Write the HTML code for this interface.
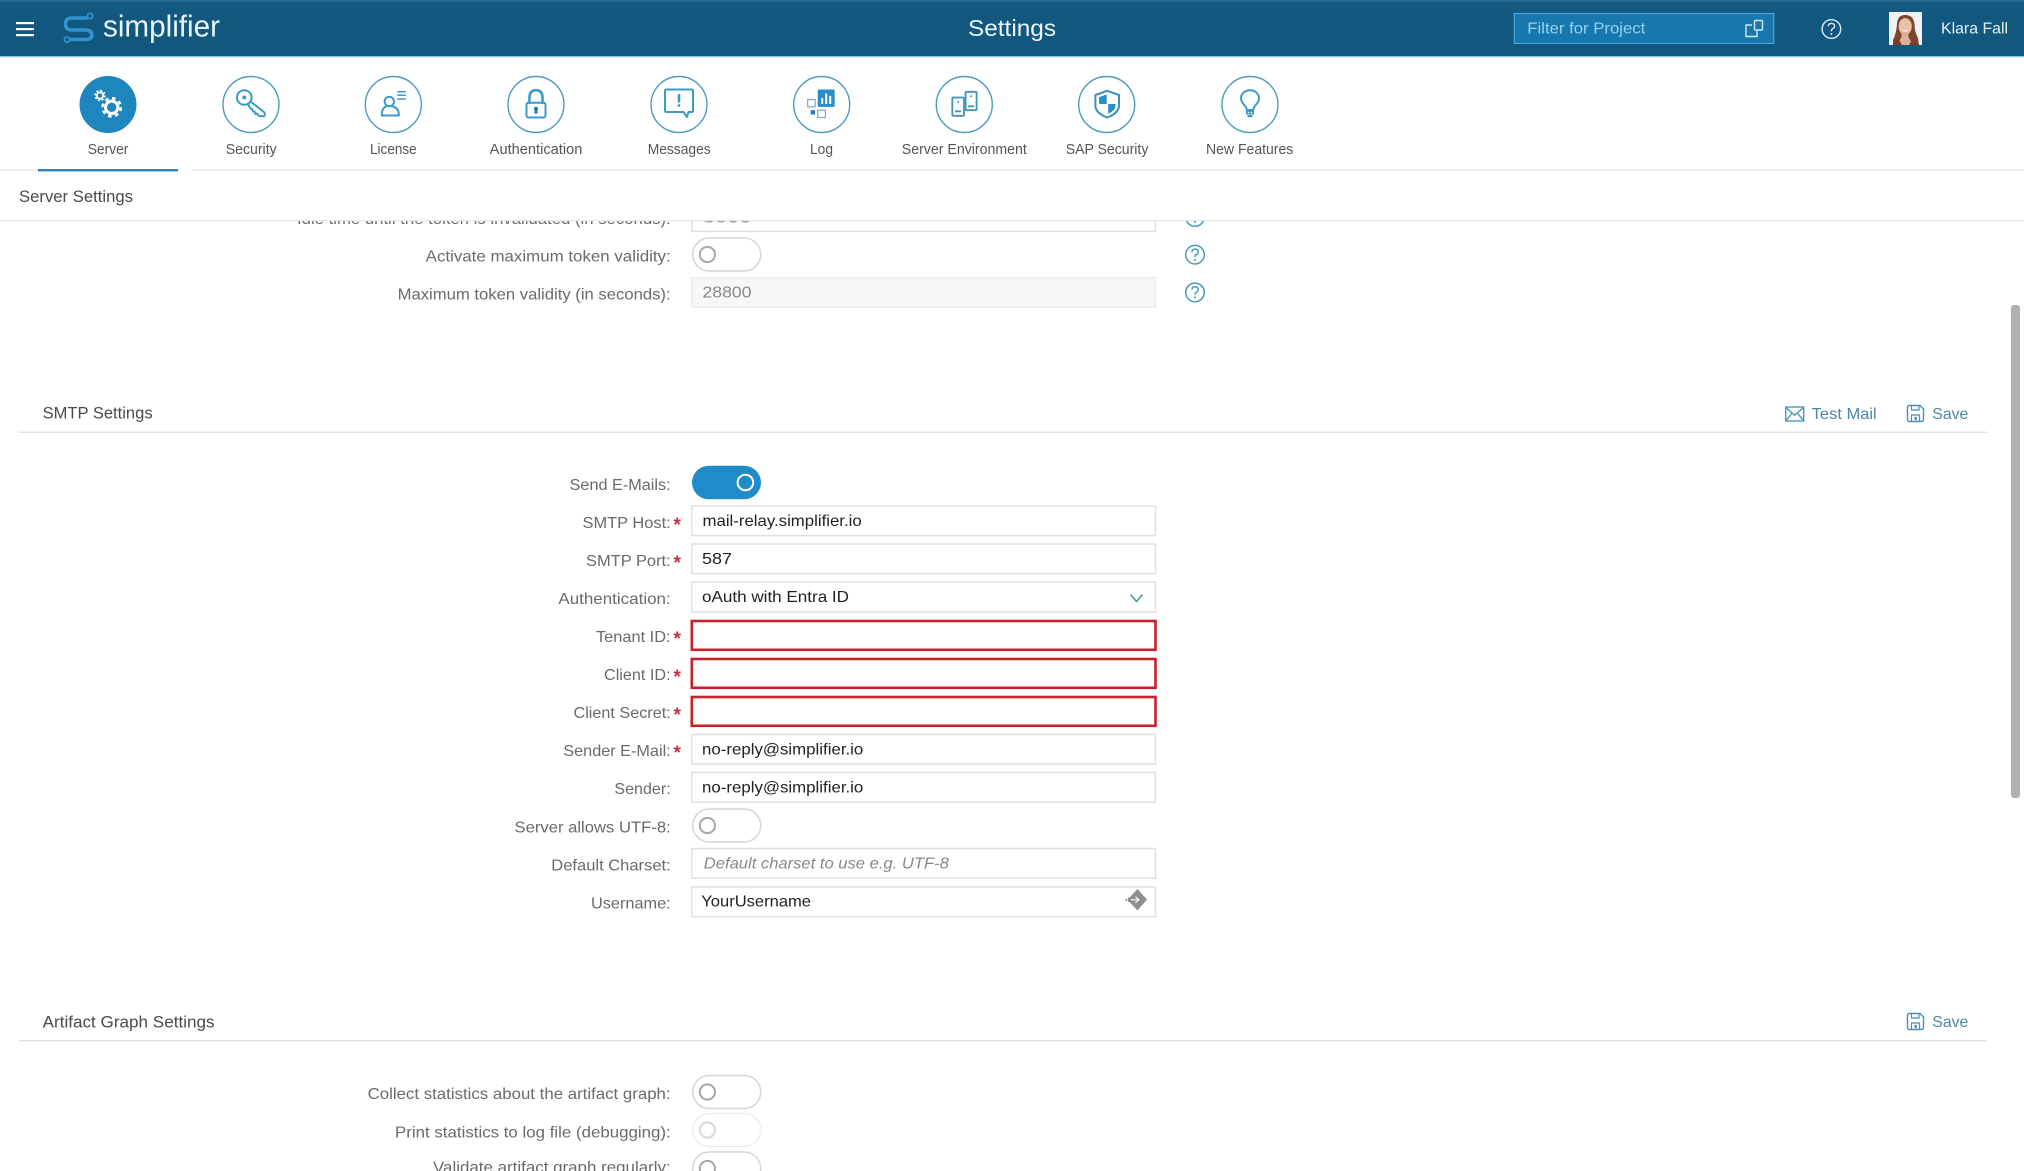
<!DOCTYPE html>
<html lang="en">
<head>
<meta charset="utf-8">
<title>Settings</title>
<style>
html,body{margin:0;padding:0;background:#fff;width:2024px;height:1171px;overflow:hidden}
svg{display:block;filter:blur(.35px)}
text{font-family:"Liberation Sans",sans-serif}
.l{font-size:16px;fill:#6a6a6a}
.v{font-size:16px;fill:#222}
.t{font-size:14.5px;fill:#555}
.s{font-size:16.5px;fill:#4a4a4a}
.a{font-size:16px;fill:#4f87a6}
.st{font-size:19px;font-weight:bold;fill:#c2303f}
.in{fill:#fff;stroke:#e0e0e0;stroke-width:1.5}
.re{fill:#fff;stroke:#c8202a;stroke-width:2.6}
.tg{fill:#fff;stroke:#d6d6d6;stroke-width:1.5}
.kn{fill:#fff;stroke:#a8a8a8;stroke-width:2}
.ic{fill:none;stroke:#3a9bc9;stroke-width:2;stroke-linejoin:round;stroke-linecap:round}
.ci{fill:#fff;stroke:#4c9cbc;stroke-width:1.4}
.f{fill:#2a8fc9}
</style>
</head>
<body>
<svg xmlns="http://www.w3.org/2000/svg" width="2024" height="1171" viewBox="0 0 2024 1171">
<defs>
<g id="help"><circle r="9.3" fill="#fff" stroke="#4a9ab5" stroke-width="1.5"/><path d="M-3,-2.6 Q-3,-5.6 0,-5.6 Q3.2,-5.6 3.2,-2.8 Q3.2,-1 1,0 Q0,.6 0,2.4" fill="none" stroke="#4a9ab5" stroke-width="1.5"/><circle cy="5" r="1" fill="#4a9ab5"/></g>
<g id="save"><path d="M1,2.5 Q1,.5 3,.5 H13.5 L17,4 V14.5 Q17,16.5 15,16.5 H3 Q1,16.5 1,14.5 Z" fill="none" stroke="#4d8fae" stroke-width="1.4"/><path d="M5,.8 V5 H12.5 V.8 M5,16 V10 H13 V16 M8.5,12.5 H10 V14.5 H8.5 Z" fill="none" stroke="#4d8fae" stroke-width="1.2"/></g>
</defs>
<rect width="2024" height="1171" fill="#fff"/>

<!-- content rows -->
<rect class="in" x="691.8" y="202" width="463.7" height="29.4"/>
<text class="l" x="297" y="224" textLength="373.7" lengthAdjust="spacingAndGlyphs">Idle time until the token is invalidated (in seconds):</text>
<text class="v" x="702.5" y="222.5" textLength="49" lengthAdjust="spacingAndGlyphs" style="fill:#888">3600</text>
<use href="#help" x="1195" y="217"/>

<text class="l" x="425.7" y="261.7" textLength="245" lengthAdjust="spacingAndGlyphs">Activate maximum token validity:</text>
<rect class="tg" x="692.7" y="238" width="68" height="33" rx="16.5"/><circle class="kn" cx="707.4" cy="254.5" r="7.6"/>
<use href="#help" x="1195" y="254.7"/>

<text class="l" x="397.6" y="299.3" textLength="273" lengthAdjust="spacingAndGlyphs">Maximum token validity (in seconds):</text>
<rect x="691.8" y="277.8" width="463.7" height="29.4" fill="#f7f7f7" stroke="#ececec" stroke-width="1.5"/>
<text class="v" x="702.5" y="297.7" textLength="49" lengthAdjust="spacingAndGlyphs" style="fill:#888">28800</text>
<use href="#help" x="1195" y="292.4"/>

<!-- SMTP header -->
<text class="s" x="42.6" y="418.5" textLength="110" lengthAdjust="spacingAndGlyphs">SMTP Settings</text>
<rect x="19" y="431.6" width="1968" height="1.4" fill="#e2e2e2"/>
<g fill="none" stroke="#4d9ab5" stroke-width="1.4"><rect x="1785.7" y="407" width="18" height="14"/><path d="M1785.7,407.3 L1794.7,415.3 L1803.7,407.3 M1785.7,420.8 L1792,413.3 M1803.7,420.8 L1797.5,413.3"/></g>
<text class="a" x="1811.7" y="419" textLength="65" lengthAdjust="spacingAndGlyphs">Test Mail</text>
<use href="#save" x="1906.5" y="405"/>
<text class="a" x="1932.3" y="419" textLength="36" lengthAdjust="spacingAndGlyphs">Save</text>

<!-- Send -->
<text class="l" x="569.6" y="490" textLength="101" lengthAdjust="spacingAndGlyphs">Send E-Mails:</text>
<rect x="692" y="465.7" width="69" height="33.6" rx="16.8" fill="#1f8cc9"/>
<circle cx="745.4" cy="482.5" r="7.8" fill="#1f8cc9" stroke="#fff" stroke-width="2"/>

<text class="l" x="582.5" y="528" textLength="88.2" lengthAdjust="spacingAndGlyphs">SMTP Host:</text>
<text class="st" x="673.5" y="531">*</text>
<rect class="in" x="691.8" y="506" width="463.7" height="29.6"/>
<text class="v" x="702.5" y="526" textLength="159.2" lengthAdjust="spacingAndGlyphs">mail-relay.simplifier.io</text>

<text class="l" x="586" y="566" textLength="84.7" lengthAdjust="spacingAndGlyphs">SMTP Port:</text>
<text class="st" x="673.5" y="569">*</text>
<rect class="in" x="691.8" y="544" width="463.7" height="29.6"/>
<text class="v" x="702" y="564" textLength="30" lengthAdjust="spacingAndGlyphs">587</text>

<text class="l" x="558.4" y="604" textLength="112.3" lengthAdjust="spacingAndGlyphs">Authentication:</text>
<rect class="in" x="691.8" y="582.2" width="463.7" height="29.8"/>
<text class="v" x="702" y="602" textLength="147" lengthAdjust="spacingAndGlyphs">oAuth with Entra ID</text>
<path d="M1130.5,594.5 L1136.5,601.5 L1142.5,594.5" fill="none" stroke="#4a9a9a" stroke-width="1.6"/>

<text class="l" x="596" y="642" textLength="74.6" lengthAdjust="spacingAndGlyphs">Tenant ID:</text>
<text class="st" x="673.5" y="645">*</text>
<rect class="re" x="691.8" y="621" width="463.7" height="28.8"/>

<text class="l" x="604" y="680" textLength="66.6" lengthAdjust="spacingAndGlyphs">Client ID:</text>
<text class="st" x="673.5" y="683">*</text>
<rect class="re" x="691.8" y="659" width="463.7" height="28.8"/>

<text class="l" x="573.5" y="718" textLength="97.2" lengthAdjust="spacingAndGlyphs">Client Secret:</text>
<text class="st" x="673.5" y="721">*</text>
<rect class="re" x="691.8" y="697" width="463.7" height="28.8"/>

<text class="l" x="563.3" y="756" textLength="107.4" lengthAdjust="spacingAndGlyphs">Sender E-Mail:</text>
<text class="st" x="673.5" y="759">*</text>
<rect class="in" x="691.8" y="734.5" width="463.7" height="29.6"/>
<text class="v" x="702" y="754.5" textLength="161.3" lengthAdjust="spacingAndGlyphs">no-reply@simplifier.io</text>

<text class="l" x="614.4" y="794" textLength="56.3" lengthAdjust="spacingAndGlyphs">Sender:</text>
<rect class="in" x="691.8" y="772.5" width="463.7" height="29.6"/>
<text class="v" x="702" y="792.5" textLength="161.3" lengthAdjust="spacingAndGlyphs">no-reply@simplifier.io</text>

<text class="l" x="514.5" y="832.3" textLength="156.2" lengthAdjust="spacingAndGlyphs">Server allows UTF-8:</text>
<rect class="tg" x="692.7" y="809" width="68" height="33" rx="16.5"/><circle class="kn" cx="707.4" cy="825.5" r="7.6"/>

<text class="l" x="551.3" y="870.7" textLength="119.4" lengthAdjust="spacingAndGlyphs">Default Charset:</text>
<rect class="in" x="691.8" y="848.5" width="463.7" height="29.6"/>
<text class="v" x="703.8" y="868.7" textLength="245" lengthAdjust="spacingAndGlyphs" style="fill:#888;font-style:italic">Default charset to use e.g. UTF-8</text>

<text class="l" x="591" y="908.3" textLength="79.7" lengthAdjust="spacingAndGlyphs">Username:</text>
<rect class="in" x="691.8" y="887" width="463.7" height="29.6"/>
<text class="v" x="701.3" y="906.7" textLength="109.7" lengthAdjust="spacingAndGlyphs">YourUsername</text>
<path d="M1137.5,889 L1147,899.5 L1137.5,910.5 L1129.5,902 H1128 V897.5 H1129.5 Z" fill="#8f8f8f"/>
<path d="M1131,899.8 H1138 M1135.5,896.8 L1139,899.8 L1135.5,902.8" fill="none" stroke="#fff" stroke-width="1.1"/>
<circle cx="1126.3" cy="899.8" r="1.1" fill="#8f8f8f"/>

<!-- Artifact -->
<text class="s" x="42.6" y="1027.5" textLength="172" lengthAdjust="spacingAndGlyphs">Artifact Graph Settings</text>
<rect x="19" y="1040" width="1968" height="1.4" fill="#e2e2e2"/>
<use href="#save" x="1906.5" y="1013"/>
<text class="a" x="1932.3" y="1027" textLength="36" lengthAdjust="spacingAndGlyphs">Save</text>

<text class="l" x="367.6" y="1099" textLength="303" lengthAdjust="spacingAndGlyphs">Collect statistics about the artifact graph:</text>
<rect class="tg" x="692.7" y="1075.5" width="68" height="33" rx="16.5"/><circle class="kn" cx="707.4" cy="1092" r="7.6"/>
<text class="l" x="395" y="1137.3" textLength="275.7" lengthAdjust="spacingAndGlyphs">Print statistics to log file (debugging):</text>
<rect x="692.7" y="1113.5" width="68" height="33" rx="16.5" fill="#fff" stroke="#efefef" stroke-width="1.5"/><circle cx="707.4" cy="1130" r="7.6" fill="#fff" stroke="#d8d8d8" stroke-width="2"/>
<text class="l" x="433" y="1172.7" textLength="237.7" lengthAdjust="spacingAndGlyphs">Validate artifact graph regularly:</text>
<rect class="tg" x="692.7" y="1152" width="68" height="33" rx="16.5"/><circle class="kn" cx="707.4" cy="1168.5" r="7.6"/>

<!-- scrollbar -->
<rect x="2011" y="305" width="9" height="493" rx="3" fill="#b0b0b0"/>

<!-- white band above scroll area -->
<rect x="0" y="57" width="2024" height="163.4" fill="#fff"/>
<rect x="0" y="220" width="2024" height="1.2" fill="#e6e6e6"/>

<!-- header -->
<rect width="2024" height="56" fill="#12577d"/>
<rect width="2024" height="14" fill="#14597f"/>
<rect width="2024" height="2" fill="#2a6c90"/>
<rect y="56" width="2024" height="1.4" fill="#8cc8e8"/>
<rect x="16" y="22" width="18" height="2.2" fill="#fff"/>
<rect x="16" y="28" width="18" height="2.2" fill="#fff"/>
<rect x="16" y="34" width="18" height="2.2" fill="#fff"/>
<g fill="none" stroke="#2e93cf">
<path d="M87.5,18 H72 Q65.5,18 65.5,24 Q65.5,30 72,30 H85 Q92,30 92,35 Q92,39.5 85,39.5 H70" stroke-width="3.4"/>
<circle cx="90" cy="16" r="2.6" stroke-width="1.8"/>
<circle cx="67" cy="39.5" r="2.6" stroke-width="1.8"/>
</g>
<text x="103" y="36.5" font-size="31" fill="#e8f4fa" textLength="117" lengthAdjust="spacingAndGlyphs">simplifier</text>
<text x="968" y="36" font-size="23" fill="#eef6fa" textLength="88" lengthAdjust="spacingAndGlyphs">Settings</text>

<rect x="1514.3" y="13.5" width="259.5" height="30" fill="#1878ae" stroke="#45a4d8" stroke-width="1.2"/>
<text x="1527.3" y="33.5" font-size="16" fill="#93d2f2" textLength="118" lengthAdjust="spacingAndGlyphs">Filter for Project</text>
<g fill="none" stroke="#cfe9f7" stroke-width="1.4"><path d="M1752,25 H1746 V36.5 H1757 V30"/><rect x="1754.5" y="20.5" width="8" height="9.5" rx="1"/></g>
<circle cx="1831.4" cy="29" r="9.3" fill="none" stroke="#dcecf5" stroke-width="1.4"/>
<path d="M1828.3,26.2 Q1828.3,23.4 1831.4,23.4 Q1834.6,23.4 1834.6,26 Q1834.6,27.8 1832.6,28.8 Q1831.4,29.5 1831.4,31.4" fill="none" stroke="#dcecf5" stroke-width="1.4"/>
<circle cx="1831.4" cy="34" r=".95" fill="#dcecf5"/>

<!-- avatar -->
<rect x="1889" y="12" width="33" height="33" fill="#eef2f5"/>
<path d="M1905,15 Q1897.5,15 1897,24 Q1896.5,33 1893,40 L1893,45 H1919 L1918,38 Q1914.5,32 1914.5,24 Q1913.5,15 1905,15 Z" fill="#7a4630"/>
<ellipse cx="1905.2" cy="26.5" rx="6.6" ry="8.4" fill="#e9c0a8"/>
<path d="M1901.5,32 H1908.5 V37 L1913,45 H1897 L1901.5,37 Z" fill="#e0b096"/>
<path d="M1893,45 L1898,38 L1902,45 Z M1913,38 L1919,45 H1909 Z" fill="#7c3d2a"/>
<path d="M1902,30 Q1905,32 1908,30" fill="none" stroke="#f5eeea" stroke-width="1"/>
<text x="1941" y="33.5" font-size="16" fill="#e6f2f8" textLength="67" lengthAdjust="spacingAndGlyphs">Klara Fall</text>

<!-- tabs line -->
<rect x="0" y="169" width="2024" height="2" fill="#efefef"/>
<rect x="178" y="169" width="13" height="2" fill="#fff"/>
<rect x="38" y="169" width="140" height="2.4" fill="#2a86ba"/>

<!-- Server -->
<circle cx="108" cy="104.5" r="28.5" fill="#1f85bd"/>
<g transform="translate(108,104.5)" fill="none" stroke="#fff">
<circle cx="-8" cy="-9" r="3.2" stroke-width="1.8"/>
<circle cx="-8" cy="-9" r="4.8" stroke-width="1.8" stroke-dasharray="2 1.77"/>
<circle cx="3.7" cy="2.8" r="6.2" stroke-width="3"/>
<circle cx="3.7" cy="2.8" r="9.1" stroke-width="2.6" stroke-dasharray="3.6 3.55"/>
</g>
<text class="t" x="87.7" y="154" textLength="40.7" lengthAdjust="spacingAndGlyphs">Server</text>

<!-- Security -->
<circle class="ci" cx="251" cy="104.5" r="28"/>
<g transform="translate(251,104.5)" class="ic">
<circle cx="-6.7" cy="-7" r="7.3"/>
<circle cx="-6.7" cy="-7" r="2" fill="#3a9bc9" stroke="none"/>
<path d="M-.5,-3 L13.5,8 Q14.5,10 13,11.8 L8,11.5 L6,9 L4.5,9.5 L3.5,7 L2,7 L1,4.5 L-.5,4 L-3,-.2"/>
</g>
<text class="t" x="225.7" y="154" textLength="51" lengthAdjust="spacingAndGlyphs">Security</text>

<!-- License -->
<circle class="ci" cx="393.3" cy="104.5" r="28"/>
<g transform="translate(393.3,104.5)" class="ic">
<circle cx="-4" cy="-3" r="4.7"/>
<path d="M-1.5,1.5 Q5.5,3.5 5.5,10 V11 H-11.5 V10 Q-11.5,3.5 -6.5,1.5"/>
<path d="M4.5,-12.7 H12 M4.5,-9.2 H12 M4.5,-5.5 H12" stroke-width="1.5"/>
</g>
<text class="t" x="370" y="154" textLength="46.7" lengthAdjust="spacingAndGlyphs">License</text>

<!-- Authentication -->
<circle class="ci" cx="536" cy="104.5" r="28"/>
<g transform="translate(536,104.5)" class="ic">
<rect x="-9.5" y="-1.7" width="19" height="14.7" rx="2"/>
<path d="M-6.5,-1.7 V-7 Q-6.5,-14.3 0,-14.3 Q6.5,-14.3 6.5,-7 V-1.7" stroke-width="2.6"/>
<circle cy="4.5" r="2.2" fill="#1f7ca8" stroke="none"/>
<path d="M-2,9 L-.8,5 H.8 L2,9 Z" fill="#1f7ca8" stroke="none"/>
</g>
<text class="t" x="489.7" y="154" textLength="92.7" lengthAdjust="spacingAndGlyphs">Authentication</text>

<!-- Messages -->
<circle class="ci" cx="679" cy="104.5" r="28"/>
<g transform="translate(679,104.5)" class="ic">
<path d="M-12.5,-15 H12.5 Q14,-15 14,-13.5 V6 Q14,7.5 12.5,7.5 H9.5 L8,12.5 L4.5,7.5 H-12.5 Q-14,7.5 -14,6 V-13.5 Q-14,-15 -12.5,-15 Z"/>
<path d="M0,-9.5 V-3" stroke-width="2.6"/>
<circle cy="1" r="1.4" fill="#3a9bc9" stroke="none"/>
</g>
<text class="t" x="647.7" y="154" textLength="63" lengthAdjust="spacingAndGlyphs">Messages</text>

<!-- Log -->
<circle class="ci" cx="821.7" cy="104.5" r="28"/>
<g transform="translate(821.7,104.5)">
<rect class="f" x="-4" y="-15" width="17" height="17.4" rx="1"/>
<rect x="-.5" y="-6.5" width="2" height="6" fill="#fff"/>
<rect x="3.5" y="-11" width="2" height="10.5" fill="#fff"/>
<rect x="7.5" y="-8.5" width="2" height="8" fill="#fff"/>
<rect x="-14" y="-5" width="7.4" height="7.3" fill="#fff" stroke="#7fa9bc" stroke-width="1.2"/>
<rect x="-11" y="5.7" width="4.3" height="4.3" fill="#1f7ca8"/>
<rect x="-4" y="5.7" width="7.7" height="7.3" fill="#fff" stroke="#7fa9bc" stroke-width="1.2"/>
</g>
<text class="t" x="810" y="154" textLength="23" lengthAdjust="spacingAndGlyphs">Log</text>

<!-- Server Environment -->
<circle class="ci" cx="964.3" cy="104.5" r="28"/>
<g transform="translate(964.3,104.5)" class="ic" style="stroke:#3f94b8;stroke-width:1.8">
<rect x="-12" y="-7" width="11.7" height="18.3" rx="1"/>
<rect x="1.3" y="-12.7" width="11" height="18.4" rx="1"/>
<circle cx="-6" cy="-2.5" r="1" fill="#3f94b8" stroke="none"/>
<circle cx="6.8" cy="-8.2" r="1" fill="#3f94b8" stroke="none"/>
<path d="M-8.5,6.8 H-4 M4.5,1.8 H9"/>
</g>
<text class="t" x="901.8" y="154" textLength="125" lengthAdjust="spacingAndGlyphs">Server Environment</text>

<!-- SAP Security -->
<circle class="ci" cx="1106.7" cy="104.5" r="28"/>
<g transform="translate(1106.7,104.5)">
<path d="M.5,-13.7 L12.3,-9.5 V1 Q12.3,8.5 .5,13 Q-11.3,8.5 -11.3,1 V-9.5 Z" fill="none" stroke="#3a8fbc" stroke-width="2"/>
<path d="M0,-10 V-.5 H-7.6 V-7.4 Z" class="f"/>
<path d="M1.5,-.5 H8.8 V1 Q8.8,6 1.5,9.2 Z" class="f"/>
</g>
<text class="t" x="1065.7" y="154" textLength="82.7" lengthAdjust="spacingAndGlyphs">SAP Security</text>

<!-- New Features -->
<circle class="ci" cx="1250" cy="104.5" r="28"/>
<g transform="translate(1250,104.5)">
<path d="M-3.2,5.5 C-3.2,1.5 -9,-1 -9,-6 C-9,-11 -5,-14.3 0,-14.3 C5,-14.3 9,-11 9,-6 C9,-1 3.2,1.5 3.2,5.5 Z" class="ic"/>
<rect x="-4" y="6" width="8" height="4" fill="#3a9bc9"/>
<rect x="-2.5" y="10.5" width="5" height="2.2" fill="#3a9bc9"/>
<circle cx="-1.5" cy="8" r=".8" fill="#fff"/><circle cx="1.5" cy="8" r=".8" fill="#fff"/>
</g>
<text class="t" x="1206" y="154" textLength="87.3" lengthAdjust="spacingAndGlyphs">New Features</text>

<text class="s" x="19" y="202" textLength="114" lengthAdjust="spacingAndGlyphs">Server Settings</text>
</svg>
</body>
</html>
